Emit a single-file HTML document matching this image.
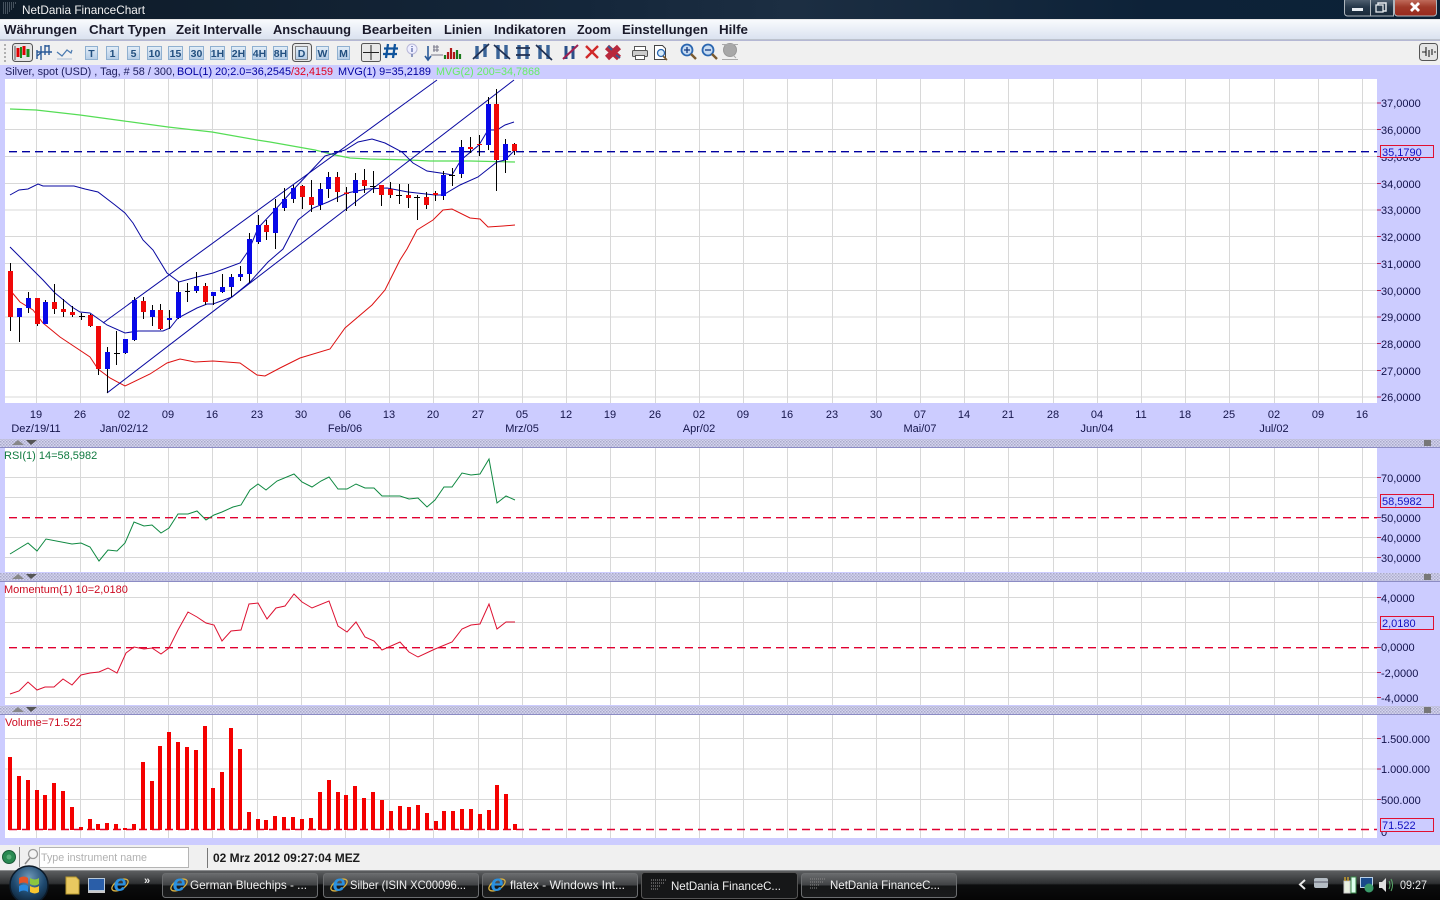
<!DOCTYPE html>
<html lang="de"><head><meta charset="utf-8"><title>NetDania FinanceChart</title>
<style>
html,body{margin:0;padding:0;background:#f0f0f0;width:1440px;height:900px;overflow:hidden}
svg{display:block;font-family:"Liberation Sans",Arial,sans-serif}
.ax{font-size:11px;fill:#10104a}
.m{font-size:13px;font-weight:bold;fill:#1a1a2a}
.b{font-size:10.5px;font-weight:bold;fill:#23507f;text-anchor:middle}
.t{font-size:12px;fill:#f2f2f2}
.x{font-size:11px;fill:#14144a;text-anchor:middle}
</style></head><body>
<svg width="1440" height="900" viewBox="0 0 1440 900" xmlns="http://www.w3.org/2000/svg">
<defs>
<linearGradient id="tb" x1="0" x2="1" y1="0" y2="0"><stop offset="0" stop-color="#0e1b28"/><stop offset=".4" stop-color="#14263a"/><stop offset=".55" stop-color="#1c2e42"/><stop offset=".8" stop-color="#0d2238"/><stop offset="1" stop-color="#0c2136"/></linearGradient>
<linearGradient id="mn" x1="0" x2="0" y1="0" y2="1"><stop offset="0" stop-color="#f8fafd"/><stop offset="1" stop-color="#d9e1ef"/></linearGradient>
<linearGradient id="task" x1="0" x2="0" y1="0" y2="1"><stop offset="0" stop-color="#5f6163"/><stop offset=".45" stop-color="#2e3032"/><stop offset=".5" stop-color="#0c0d0e"/><stop offset="1" stop-color="#050505"/></linearGradient>
<linearGradient id="tbtn" x1="0" x2="0" y1="0" y2="1"><stop offset="0" stop-color="#6a6c6e"/><stop offset=".48" stop-color="#414345"/><stop offset=".52" stop-color="#161718"/><stop offset="1" stop-color="#1a1b1c"/></linearGradient>
<linearGradient id="cls" x1="0" x2="0" y1="0" y2="1"><stop offset="0" stop-color="#c87868"/><stop offset=".5" stop-color="#a03a2a"/><stop offset="1" stop-color="#98281c"/></linearGradient>
<linearGradient id="wbt" x1="0" x2="0" y1="0" y2="1"><stop offset="0" stop-color="#5a6a7a"/><stop offset=".5" stop-color="#26384a"/><stop offset="1" stop-color="#182838"/></linearGradient>
<radialGradient id="orb" cx=".5" cy=".3" r=".75"><stop offset="0" stop-color="#6f98b8"/><stop offset=".55" stop-color="#1f4a70"/><stop offset="1" stop-color="#0a1c2c"/></radialGradient>
<linearGradient id="tool" x1="0" x2="0" y1="0" y2="1"><stop offset="0" stop-color="#e4eef8"/><stop offset="1" stop-color="#b4cce6"/></linearGradient>
<pattern id="dots" width="3" height="3" patternUnits="userSpaceOnUse"><rect width="3" height="3" fill="#d4d4ee"/><rect width="1.5" height="1.5" fill="#a9a9c9"/><rect x="1.5" y="1.5" width="1.5" height="1.5" fill="#b4b4d4"/></pattern>
<g id="ie"><ellipse cx="0" cy="-6" rx="9" ry="4.500" fill="none" stroke="#d8b040" stroke-width="1.300" transform="rotate(-30 0 -6)"/><text x="0" y="0" font-size="23" font-weight="bold" font-style="italic" fill="#2a90e0" text-anchor="middle" font-family="Liberation Sans,sans-serif">e</text></g>
<g id="mag"><circle cx="-2" cy="-2" r="5.500" fill="#c8dcf2" stroke="#2a66b0" stroke-width="1.800"/><path d="M2 2 7 7" stroke="#7a5a30" stroke-width="2.400"/></g>
</defs>

<!-- base -->
<rect width="1440" height="900" fill="#ccccff"/>
<rect width="1440" height="19" fill="url(#tb)"/>
<rect y="19" width="1440" height="1" fill="#e8e8e8"/>
<rect y="20" width="1440" height="20" fill="url(#mn)"/>
<rect y="39.500" width="1440" height="1" fill="#9ea3aa"/>
<rect y="41" width="1440" height="24" fill="#f0f0f0"/>
<rect y="845" width="1440" height="25" fill="#f0f0f0"/>

<!-- title bar -->
<path d="M3 3h13M3 5h12M3 7h11M3 9h9M3 11h7M3 13h5" stroke="#9aa4ae" stroke-dasharray="1 1" opacity=".8"/>
<text x="22" y="14" class="t" textLength="123" lengthAdjust="spacingAndGlyphs">NetDania FinanceChart</text>
<g>
<rect x="1344.500" y="-2" width="30" height="18" rx="3" fill="url(#wbt)" stroke="#aeb6bd"/>
<rect x="1370.500" y="-2" width="23" height="18" fill="url(#wbt)" stroke="#aeb6bd"/>
<rect x="1394.500" y="-2" width="42" height="18" rx="3" fill="url(#cls)" stroke="#aeb6bd"/>
<rect x="1352" y="8" width="11" height="3" fill="#e8edf2"/>
<rect x="1378" y="3" width="8" height="8" fill="none" stroke="#e4e8ec" stroke-width="1.500"/><rect x="1376" y="5" width="7" height="7" fill="#2a3c4e" stroke="#e4e8ec" stroke-width="1.300"/>
<path d="M1411 3 1419 11M1419 3 1411 11" stroke="#fff" stroke-width="2.800"/>
</g>

<!-- menu -->
<text x="4" y="34" class="m" textLength="73" lengthAdjust="spacingAndGlyphs">Währungen</text>
<text x="89" y="34" class="m" textLength="77" lengthAdjust="spacingAndGlyphs">Chart Typen</text>
<text x="176" y="34" class="m" textLength="86" lengthAdjust="spacingAndGlyphs">Zeit Intervalle</text>
<text x="273" y="34" class="m" textLength="78" lengthAdjust="spacingAndGlyphs">Anschauung</text>
<text x="362" y="34" class="m" textLength="70" lengthAdjust="spacingAndGlyphs">Bearbeiten</text>
<text x="444" y="34" class="m" textLength="38" lengthAdjust="spacingAndGlyphs">Linien</text>
<text x="494" y="34" class="m" textLength="72" lengthAdjust="spacingAndGlyphs">Indikatoren</text>
<text x="577" y="34" class="m" textLength="34" lengthAdjust="spacingAndGlyphs">Zoom</text>
<text x="622" y="34" class="m" textLength="86" lengthAdjust="spacingAndGlyphs">Einstellungen</text>
<text x="719" y="34" class="m" textLength="29" lengthAdjust="spacingAndGlyphs">Hilfe</text>

<!-- toolbar -->
<path d="M5 44v18" stroke="#b0b0b0" stroke-width="2" stroke-dasharray="2 2"/>
<rect x="12.500" y="43.500" width="20" height="18" rx="3" fill="#e4e4e4" stroke="#555"/>
<path d="M18 48v9M24 46v9" stroke="#e00000" stroke-width="3"/><path d="M21 47v11" stroke="#1a8a1a" stroke-width="2"/><path d="M28 49v8" stroke="#1a8a1a" stroke-width="3"/><path d="M15 46v14" stroke="#555"/>
<path d="M37 59V50M41 46v14M37 52h8M45 45v10M49 45v10M45 46h4M45 52h7M37 56l5-4" stroke="#2a5a98" stroke-width="1.400" fill="none"/>
<path d="M57 52l5 4 5-6 4 3 1-3" fill="none" stroke="#4a7ab0" stroke-width="1.200"/><path d="M57 59h15" stroke="#a8bcd4"/>
<g fill="url(#tool)" stroke="#8fb0d0">
<rect x="85.500" y="46.500" width="12" height="13"/><rect x="106.500" y="46.500" width="12" height="13"/><rect x="127.500" y="46.500" width="12" height="13"/><rect x="147.500" y="46.500" width="14" height="13"/><rect x="168.500" y="46.500" width="14" height="13"/><rect x="189.500" y="46.500" width="14" height="13"/><rect x="210.500" y="46.500" width="14" height="13"/><rect x="231.500" y="46.500" width="14" height="13"/><rect x="252.500" y="46.500" width="14" height="13"/><rect x="273.500" y="46.500" width="14" height="13"/><rect x="316.500" y="46.500" width="12" height="13"/><rect x="337.500" y="46.500" width="12" height="13"/>
</g>
<rect x="292.500" y="43.500" width="19" height="18" rx="3" fill="#e8e8e8" stroke="#555"/><rect x="295.500" y="46.500" width="12" height="13" fill="url(#tool)" stroke="#222" stroke-dasharray="1 1"/>
<text x="91.500" y="57" class="b">T</text><text x="112.500" y="57" class="b">1</text><text x="133.500" y="57" class="b">5</text><text x="154.500" y="57" class="b">10</text><text x="175.500" y="57" class="b">15</text><text x="196.500" y="57" class="b">30</text><text x="217.500" y="57" class="b">1H</text><text x="238.500" y="57" class="b">2H</text><text x="259.500" y="57" class="b">4H</text><text x="280.500" y="57" class="b">8H</text><text x="301.500" y="57" class="b">D</text><text x="322.500" y="57" class="b">W</text><text x="343.500" y="57" class="b">M</text>
<rect x="361.500" y="43.500" width="19" height="18" rx="2" fill="#e8e8e8" stroke="#555"/><path d="M371 45v15M363 52.500h16" stroke="#222"/>
<path d="M388 44 386 58M395 44 393 58M384 48.500h14M383 54h14" stroke="#10549c" stroke-width="2.300" fill="none"/>
<circle cx="412" cy="49" r="5" fill="#eef" stroke="#b8b8d8"/><path d="M412 46v1M412 48v4M412 54v3" stroke="#5060a0" stroke-width="1.200"/>
<path d="M428 46v14M425 56l3 4 3-4" stroke="#2a5a98" stroke-width="1.600" fill="none"/><path d="M434 45v7M437 45v7M433 47h6M433 50h6M431 55h12" stroke="#778" stroke-width="1" fill="none"/>
<path d="M448 59V52M451 59V48M454 59V52" stroke="#b01818" stroke-width="2.200"/><path d="M445 59V55M457 59V50M460 59V54" stroke="#1a7a1a" stroke-width="2.200"/>
<path d="M477 46v13M485 44v13M498 45v14M506 45v14M519 45v14M527 45v14M540 45v14M548 45v14" stroke="#3a6498" stroke-width="3.400" fill="none"/>
<path d="M473 59 489 44M494 45 510 59M516 48h14M516 55h14M536 45 552 60" stroke="#1f2f50" stroke-width="1.700" fill="none"/>
<path d="M566 46v13M573 46v13" stroke="#2a4e88" stroke-width="3"/><path d="M563 59 578 45" stroke="#a02050" stroke-width="2"/>
<path d="M586 46 598 58M598 46 586 58" stroke="#d02828" stroke-width="2.400"/>
<path d="M607 47 619 58M619 47 607 58" stroke="#b8283c" stroke-width="6"/><path d="M608 46l4 4M616 55l4 3" stroke="#3a5a90" stroke-width="2"/>
<rect x="634.500" y="46.500" width="11" height="4" fill="#fff" stroke="#555"/><rect x="632.500" y="50.500" width="15" height="6" rx="1" fill="#ccc" stroke="#555"/><rect x="635.500" y="55.500" width="9" height="4" fill="#fff" stroke="#555"/>
<path d="M654.500 45.500h8l3 3v11h-11z" fill="#fff" stroke="#444"/><circle cx="661" cy="53" r="3.500" fill="#d8ecfa" stroke="#2a66b0" stroke-width="1.300"/><path d="M663 56l4 4" stroke="#7a5a30" stroke-width="1.600"/>
<use href="#mag" x="689" y="52"/><path d="M684 50h6M687 47v6" stroke="#123a80" stroke-width="1.300"/>
<use href="#mag" x="710" y="52"/><path d="M705 50h6" stroke="#123a80" stroke-width="1.300"/>
<circle cx="730" cy="50" r="6.500" fill="#a8a8a8" stroke="#999"/><path d="M722 44.500h16M722 59.500h16M724 45l4 2M736 58l-3-3" stroke="#aaa"/>
<rect x="1419.500" y="43.500" width="18" height="17" rx="3" fill="#e4e4e4" stroke="#555"/><path d="M1422 52h4M1426 47v9M1429 50v7M1432 49v6M1434 52h2" stroke="#222" stroke-width="1.100"/>

<!-- chart legend -->
<text x="5" y="75" font-size="11" fill="#1c1c5c" textLength="170" lengthAdjust="spacingAndGlyphs">Silver, spot (USD) , Tag, # 58 / 300,</text>
<text x="177" y="75" font-size="11" fill="#0000a0" textLength="114" lengthAdjust="spacingAndGlyphs">BOL(1) 20;2.0=36,2545</text>
<text x="291" y="75" font-size="11" fill="#e00020" textLength="42" lengthAdjust="spacingAndGlyphs">/32,4159</text>
<text x="338" y="75" font-size="11" fill="#0000a0" textLength="93" lengthAdjust="spacingAndGlyphs">MVG(1) 9=35,2189</text>
<text x="436" y="75" font-size="11" fill="#66ee66" textLength="104" lengthAdjust="spacingAndGlyphs">MVG(2) 200=34,7868</text>

<!-- panels white -->
<rect x="5" y="79" width="1372" height="324" fill="#fff"/>
<rect x="5" y="448" width="1372" height="124" fill="#fff"/>
<rect x="5" y="582" width="1372" height="123" fill="#fff"/>
<rect x="5" y="715" width="1372" height="123" fill="#fff"/>

<!-- grid -->
<g stroke="#d8d8d8" fill="none">
<path d="M36.500 79V403M80.500 79V403M124.500 79V403M168.500 79V403M212.500 79V403M257.500 79V403M301.500 79V403M345.500 79V403M389.500 79V403M433.500 79V403M478.500 79V403M522.500 79V403M566.500 79V403M610.500 79V403M655.500 79V403M699.500 79V403M743.500 79V403M787.500 79V403M832.500 79V403M876.500 79V403M920.500 79V403M964.500 79V403M1008.500 79V403M1053.500 79V403M1097.500 79V403M1141.500 79V403M1185.500 79V403M1229.500 79V403M1274.500 79V403M1318.500 79V403M1362.500 79V403"/>
<path d="M5 103H1377M5 129.500H1377M5 156.500H1377M5 183.500H1377M5 210H1377M5 236.500H1377M5 263.500H1377M5 290.500H1377M5 317H1377M5 343.500H1377M5 370.500H1377M5 397H1377"/>
<path d="M36.500 448V572M80.500 448V572M124.500 448V572M168.500 448V572M212.500 448V572M257.500 448V572M301.500 448V572M345.500 448V572M389.500 448V572M433.500 448V572M478.500 448V572M522.500 448V572M566.500 448V572M610.500 448V572M655.500 448V572M699.500 448V572M743.500 448V572M787.500 448V572M832.500 448V572M876.500 448V572M920.500 448V572M964.500 448V572M1008.500 448V572M1053.500 448V572M1097.500 448V572M1141.500 448V572M1185.500 448V572M1229.500 448V572M1274.500 448V572M1318.500 448V572M1362.500 448V572"/>
<path d="M5 477.500H1377M5 497.500H1377M5 537.500H1377M5 557.500H1377"/>
<path d="M36.500 582V705M80.500 582V705M124.500 582V705M168.500 582V705M212.500 582V705M257.500 582V705M301.500 582V705M345.500 582V705M389.500 582V705M433.500 582V705M478.500 582V705M522.500 582V705M566.500 582V705M610.500 582V705M655.500 582V705M699.500 582V705M743.500 582V705M787.500 582V705M832.500 582V705M876.500 582V705M920.500 582V705M964.500 582V705M1008.500 582V705M1053.500 582V705M1097.500 582V705M1141.500 582V705M1185.500 582V705M1229.500 582V705M1274.500 582V705M1318.500 582V705M1362.500 582V705"/>
<path d="M5 597.500H1377M5 622.500H1377M5 672.500H1377M5 697.500H1377"/>
<path d="M36.500 715V838M80.500 715V838M124.500 715V838M168.500 715V838M212.500 715V838M257.500 715V838M301.500 715V838M345.500 715V838M389.500 715V838M433.500 715V838M478.500 715V838M522.500 715V838M566.500 715V838M610.500 715V838M655.500 715V838M699.500 715V838M743.500 715V838M787.500 715V838M832.500 715V838M876.500 715V838M920.500 715V838M964.500 715V838M1008.500 715V838M1053.500 715V838M1097.500 715V838M1141.500 715V838M1185.500 715V838M1229.500 715V838M1274.500 715V838M1318.500 715V838M1362.500 715V838"/>
<path d="M5 738.500H1377M5 769H1377M5 799.500H1377"/>
</g>

<!-- main chart -->
<path d="M10 109 36 110 80 115 124 121 168 127 212 132 257 140 270 142 315 150 335 155 350 158 370 159 410 160 430 161 470 161 515 162" fill="none" stroke="#55dd55" stroke-width="1.200"/>
<path d="M9 151.700H1377" stroke="#0000a0" stroke-width="1.400" stroke-dasharray="8 5"/>
<path d="M10 290 20 302 33 310 43 323 60 337 90 357 98 369 110 378 125 386 150 374 167 363 180 359 195 362 213 361 240 363 257 375 265 376 280 368 300 358 330 349 345 328 372 305 385 290 400 260 407 249 417 230 433 220 443 210 452 209 470 218 480 219 488 227 503 226 515 225" fill="none" stroke="#dd1010"/>
<g fill="none" stroke="#0808a0">
<path d="M103 323 437 80"/><path d="M107 393 514 80"/>
<path d="M10 195 19 190 28 189 38 184 43 186 74 186 85 189 98 192 115 205 125 213 133 223 143 240 153 250 167 273 179 282 197 277 213 273 240 263 249 250 258 228 275 210 293 190 310 172 325 156 345 150 358 142 372 139 385 143 402 152 413 163 427 171 447 174 452 175 461 160 479 145 488 130 497 130 505 125 514 122"/>
<path d="M10 247 43 280 55 293 72 307 80 312 90 313 100 320 107 325 125 333 138 331 163 331 170 328 178 318 197 308 207 304 213 304 232 297 250 282 268 262 283 249 298 220 313 208 328 202 347 193 367 189 387 188 408 192 435 195 443 195 460 185 478 177 497 162 505 160 514 151"/>
</g>
<path d="M10.500 263V331M19.500 308V342M28.500 292V313M37.500 298V326M45.500 300V324M54.500 284V314M63.500 299V317M72.500 306V317M81.500 313V320M90.500 314V327M98.500 326V375M107.500 347V393M116.500 331V365M125.500 339V354M134.500 297V341M143.500 297V319M152.500 305V326M160.500 304V330M169.500 310V329M178.500 282V319M187.500 283V302M196.500 272V293M205.500 283V305M213.500 292V305M222.500 274V293M231.500 274V297M240.500 266V281M249.500 233V283M258.500 215V244M266.500 220V240M275.500 199V249M284.500 188V211M293.500 185V203M302.500 185V209M311.500 180V212M320.500 183V210M328.500 172V198M337.500 172V202M346.500 187V211M355.500 173V206M364.500 169V193M373.500 171V193M381.500 185V206M390.500 182V198M399.500 184V204M408.500 184V208M417.500 195V220M426.500 192V209M435.500 191V201M443.500 171V200M452.500 168V186M461.500 140V178M470.500 137V153M479.500 135V156M488.500 97V150M496.500 89V191M505.500 139V173M514.500 143V155" stroke="#000" fill="none"/>
<path d="M79 316.500h6M114 353.500h6M185 291.500h5M370 186.500h6M396 195.500h6M414 197.500h6M449 175.500h6" stroke="#000"/>
<path d="M19.500 308V317M28.500 298V308M45.500 302V324M107.500 352V369M125.500 339V353M134.500 300V340M152.500 310V317M169.500 318V320M178.500 292V318M196.500 286V291M213.500 292V296M222.500 287V292M231.500 277V287M240.500 274V277M249.500 239V274M258.500 225V242M275.500 208V233M284.500 199V208M293.500 188V199M320.500 189V205M328.500 177V189M355.500 180V193M443.500 175V196M461.500 147V174M488.500 104V145M505.500 144V160" stroke="#0808e8" stroke-width="5" fill="none"/>
<path d="M10.500 271V317M37.500 298V324M54.500 302V309M63.500 309V312M72.500 312V315M90.500 315V326M98.500 326V369M143.500 301V312M160.500 310V329M205.500 286V302M266.500 225V232M302.500 186V197M311.500 197V205M337.500 177V192M346.500 192.500V194M364.500 180V186M381.500 185V195M390.500 189V195M408.500 195V198M426.500 197V205M435.500 193V195M470.500 147V149M479.500 144V145M496.500 104V160M514.500 144V151" stroke="#f00808" stroke-width="5" fill="none"/>

<!-- axis -->
<g class="ax">
<text x="1381" y="107">37,0000</text><text x="1381" y="134">36,0000</text><text x="1381" y="161">35,0000</text><text x="1381" y="188">34,0000</text><text x="1381" y="214">33,0000</text><text x="1381" y="241">32,0000</text><text x="1381" y="268">31,0000</text><text x="1381" y="295">30,0000</text><text x="1381" y="321">29,0000</text><text x="1381" y="348">28,0000</text><text x="1381" y="375">27,0000</text><text x="1381" y="401">26,0000</text>
<text x="1381" y="482">70,0000</text><text x="1381" y="522">50,0000</text><text x="1381" y="542">40,0000</text><text x="1381" y="562">30,0000</text>
<text x="1381" y="602">4,0000</text><text x="1381" y="651">0,0000</text><text x="1381" y="677">-2,0000</text><text x="1381" y="702">-4,0000</text>
<text x="1381" y="743">1.500.000</text><text x="1381" y="773">1.000.000</text><text x="1381" y="804">500.000</text><text x="1381" y="836">0</text>
</g>
<path d="M1377 103h4M1377 129.500h4M1377 156.500h4M1377 183.500h4M1377 210h4M1377 236.500h4M1377 263.500h4M1377 290.500h4M1377 317h4M1377 343.500h4M1377 370.500h4M1377 397h4M1377 477.500h4M1377 517.500h4M1377 537.500h4M1377 557.500h4M1377 597.500h4M1377 647.500h4M1377 672.500h4M1377 697.500h4M1377 738.500h4M1377 769h4M1377 799.500h4" stroke="#c02050"/>
<rect x="1380.500" y="145.500" width="53" height="12" fill="#ccccff" stroke="#e01030"/><text x="1382" y="156" font-size="11" fill="#1010c0">35,1790</text>
<rect x="1380.500" y="494.500" width="53" height="13" fill="#ccccff" stroke="#e01030"/><text x="1382" y="505" font-size="11" fill="#1010c0">58,5982</text>
<rect x="1380.500" y="616.500" width="53" height="13" fill="#ccccff" stroke="#e01030"/><text x="1382" y="627" font-size="11" fill="#1010c0">2,0180</text>
<rect x="1380.500" y="818.500" width="53" height="13" fill="#ccccff" stroke="#e01030"/><text x="1382" y="829" font-size="11" fill="#1010c0">71.522</text>

<!-- time axis -->
<g class="x">
<text x="36" y="418">19</text><text x="80" y="418">26</text><text x="124" y="418">02</text><text x="168" y="418">09</text><text x="212" y="418">16</text><text x="257" y="418">23</text><text x="301" y="418">30</text><text x="345" y="418">06</text><text x="389" y="418">13</text><text x="433" y="418">20</text><text x="478" y="418">27</text><text x="522" y="418">05</text><text x="566" y="418">12</text><text x="610" y="418">19</text><text x="655" y="418">26</text><text x="699" y="418">02</text><text x="743" y="418">09</text><text x="787" y="418">16</text><text x="832" y="418">23</text><text x="876" y="418">30</text><text x="920" y="418">07</text><text x="964" y="418">14</text><text x="1008" y="418">21</text><text x="1053" y="418">28</text><text x="1097" y="418">04</text><text x="1141" y="418">11</text><text x="1185" y="418">18</text><text x="1229" y="418">25</text><text x="1274" y="418">02</text><text x="1318" y="418">09</text><text x="1362" y="418">16</text>
<text x="36" y="432">Dez/19/11</text><text x="124" y="432">Jan/02/12</text><text x="345" y="432">Feb/06</text><text x="522" y="432">Mrz/05</text><text x="699" y="432">Apr/02</text><text x="920" y="432">Mai/07</text><text x="1097" y="432">Jun/04</text><text x="1274" y="432">Jul/02</text>
</g>

<!-- separators -->
<rect y="439" width="1440" height="8" fill="url(#dots)"/><rect y="447" width="1440" height="1" fill="#8c8cc4"/>
<rect y="573" width="1440" height="8" fill="url(#dots)"/><rect y="581" width="1440" height="1" fill="#8c8cc4"/>
<rect y="706" width="1440" height="8" fill="url(#dots)"/><rect y="714" width="1440" height="1" fill="#8c8cc4"/>
<g fill="#888"><path d="M12 445 18 440 24 445z"/><path d="M26 440H37L31 445z" fill="#555"/></g>
<g fill="#888"><path d="M12 579 18 574 24 579z"/><path d="M26 574H37L31 579z" fill="#555"/></g>
<g fill="#888"><path d="M12 712 18 707 24 712z"/><path d="M26 707H37L31 712z" fill="#555"/></g>
<g fill="#777"><rect x="1424" y="440" width="7" height="6"/><rect x="1424" y="574" width="7" height="6"/><rect x="1424" y="707" width="7" height="6"/></g>

<!-- RSI -->
<text x="4" y="459" font-size="11" fill="#107a40">RSI(1) 14=58,5982</text>
<path d="M9 517.700H1377" stroke="#e00030" stroke-width="1.400" stroke-dasharray="8 5"/>
<path d="M10 554 28 543 37 551 46 539 72 544 81 543 90 547 99 561 108 550 117 551 125 543 134 522 144 526 152 525 161 533 169 528 178 514 188 514 197 511 206 520 214 515 222 512 233 507 241 505 250 490 258 484 266 490 277 481 294 474 302 482 312 487 321 481 329 477 338 489 347 489 356 484 365 488 374 488 382 496 400 496 409 499 418 498 427 507 435 500 444 487 452 487 462 473 471 475 480 474 489 459 497 503 506 496 515 500" fill="none" stroke="#0e8840"/>

<!-- Momentum -->
<text x="4" y="593" font-size="11" fill="#cc0a20">Momentum(1) 10=2,0180</text>
<path d="M9 647.700H1377" stroke="#e00030" stroke-width="1.400" stroke-dasharray="8 5"/>
<path d="M10 694 19 691 28 682 37 690 45 687 54 687 63 679 72 685 81 675 90 673 99 672 108 668 117 673 126 653 134 647 144 649 152 648 161 654 169 648 178 630 188 612 197 617 206 623 214 625 222 641 231 631 241 630 249 604 258 603 267 619 276 608 285 606 294 594 302 602 312 608 329 601 338 626 347 632 356 622 365 637 374 641 382 650 400 642 409 652 418 657 435 649 452 642 462 629 471 625 480 624 489 604 497 629 506 622 515 622" fill="none" stroke="#dd1030"/>

<!-- Volume -->
<text x="5" y="726" font-size="11" fill="#cc0a20">Volume=71.522</text>
<path d="M9 829.500H1377" stroke="#e00030" stroke-width="1.400" stroke-dasharray="8 5"/>
<path d="M10 757V830M19 776V830M28 780V830M37 790V830M45 795V830M54 783V830M63 791V830M72 807V830M81 827V830M90 819V830M98 824V830M107 823V830M116 824V830M125 828V830M134 824V830M143 762V830M152 781V830M160 746V830M169 732V830M178 742V830M187 747V830M196 750V830M205 726V830M213 788V830M222 772V830M231 728V830M240 749V830M249 812V830M258 819V830M266 820V830M275 816V830M284 817V830M293 817V830M302 819V830M311 818V830M320 792V830M329 780V830M338 792V830M346 795V830M355 786V830M364 798V830M373 792V830M382 800V830M391 811V830M400 806V830M409 807V830M418 805V830M427 813V830M436 821V830M444 811V830M453 811V830M462 809V830M471 809V830M480 814V830M489 810V830M497 785V830M506 794V830M515 824V830" stroke="#f40000" stroke-width="4" fill="none"/>

<!-- status bar -->
<circle cx="9" cy="857" r="6.500" fill="#2a8a52" stroke="#1a5a38"/><circle cx="9" cy="857" r="2.500" fill="#5aae7a"/>
<path d="M19.500 847v20" stroke="#888"/>
<circle cx="33" cy="854" r="4.500" fill="#f4f4f4" stroke="#999" stroke-width="1.300"/><path d="M30 858 25 864" stroke="#888" stroke-width="1.500"/>
<rect x="39.500" y="847.500" width="149" height="20" fill="#fff" stroke="#b4b4b4"/>
<text x="41" y="861" font-size="11" fill="#b0b0b0" textLength="106" lengthAdjust="spacingAndGlyphs">Type instrument name</text>
<path d="M207.500 848v20" stroke="#777"/>
<text x="213" y="862" font-size="12" font-weight="bold" fill="#1a1a1a" textLength="147" lengthAdjust="spacingAndGlyphs">02 Mrz 2012 09:27:04 MEZ</text>

<!-- taskbar -->
<rect y="870" width="1440" height="30" fill="url(#task)"/>
<rect y="870" width="1440" height="1" fill="#8a8c8e"/>
<circle cx="29" cy="885" r="19" fill="url(#orb)" stroke="#0c1a28" stroke-width="1.500"/>
<path d="M19 878q5-3 9 0v6q-4-3-9 0z" fill="#e2542a"/><path d="M30 878q5 3 9 0v6q-4 3-9 0z" fill="#8cc63f"/><path d="M19 886q5-3 9 0v6q-4-3-9 0z" fill="#2a8ae0"/><path d="M30 886q5 3 9 0v6q-4 3-9 0z" fill="#f8c630"/>
<path d="M66 877h10l3 3v14H66z" fill="#e8c860" stroke="#b89a30"/>
<rect x="88.500" y="878.500" width="16" height="12" fill="#2a5ea8" stroke="#b8c8d8"/><path d="M88 892h17" stroke="#c8c8c8" stroke-width="2"/>
<use href="#ie" x="120" y="891"/>
<text x="144" y="884" font-size="11" font-weight="bold" fill="#e8e8e8">»</text>
<g fill="url(#tbtn)" stroke="#6c6e70">
<rect x="162.500" y="873.500" width="155" height="24" rx="3"/><rect x="323.500" y="873.500" width="155" height="24" rx="3"/><rect x="482.500" y="873.500" width="155" height="24" rx="3"/><rect x="801.500" y="873.500" width="155" height="24" rx="3"/>
<rect x="641.500" y="872.500" width="156" height="26" rx="3" fill="#161718" stroke="#555"/>
</g>
<use href="#ie" x="179" y="891"/><use href="#ie" x="339" y="891"/><use href="#ie" x="497" y="891"/>
<g font-size="12" fill="#f0f0f0">
<text x="190" y="889" textLength="117" lengthAdjust="spacingAndGlyphs">German Bluechips - ...</text>
<text x="350" y="889" textLength="116" lengthAdjust="spacingAndGlyphs">Silber (ISIN XC00096...</text>
<text x="510" y="889" textLength="115" lengthAdjust="spacingAndGlyphs">flatex - Windows Int...</text>
<text x="671" y="890" textLength="110" lengthAdjust="spacingAndGlyphs">NetDania FinanceC...</text>
<text x="830" y="889" textLength="110" lengthAdjust="spacingAndGlyphs">NetDania FinanceC...</text>
</g>
<path d="M651 880h15M651 883h13M651 886h10M651 889h7" stroke="#9a9a9a" stroke-dasharray="1 1"/>
<path d="M810 879h15M810 882h13M810 885h10M810 888h7" stroke="#8a8a8a" stroke-dasharray="1 1"/>
<path d="M1305 880 1300 884.500 1305 889" fill="none" stroke="#e8e8e8" stroke-width="2"/>
<rect x="1314" y="878" width="14" height="10" rx="2" fill="#b4bcc4"/><path d="M1314 882h14" stroke="#556"/>
<path d="M1344 881h6v12h-6z" fill="#e8f0e0" stroke="#ccc"/><rect x="1351" y="877" width="5" height="16" fill="#dfe" stroke="#3a8a4a"/><path d="M1345 877v4M1348 877v4" stroke="#c8a030" stroke-width="1.500"/>
<rect x="1360.500" y="877.500" width="12" height="10" fill="#1a4a8a" stroke="#b8d0e8"/><circle cx="1369" cy="888" r="4.500" fill="#3a9a6a"/>
<path d="M1379 882h3l4-4v14l-4-4h-3z" fill="#e0e0e0"/><path d="M1389 881q2 4 0 8M1391 879q3 6 0 12" fill="none" stroke="#5aaa6a"/>
<text x="1400" y="889" font-size="12" fill="#e8e8e8" textLength="27" lengthAdjust="spacingAndGlyphs">09:27</text>
</svg>
</body></html>
